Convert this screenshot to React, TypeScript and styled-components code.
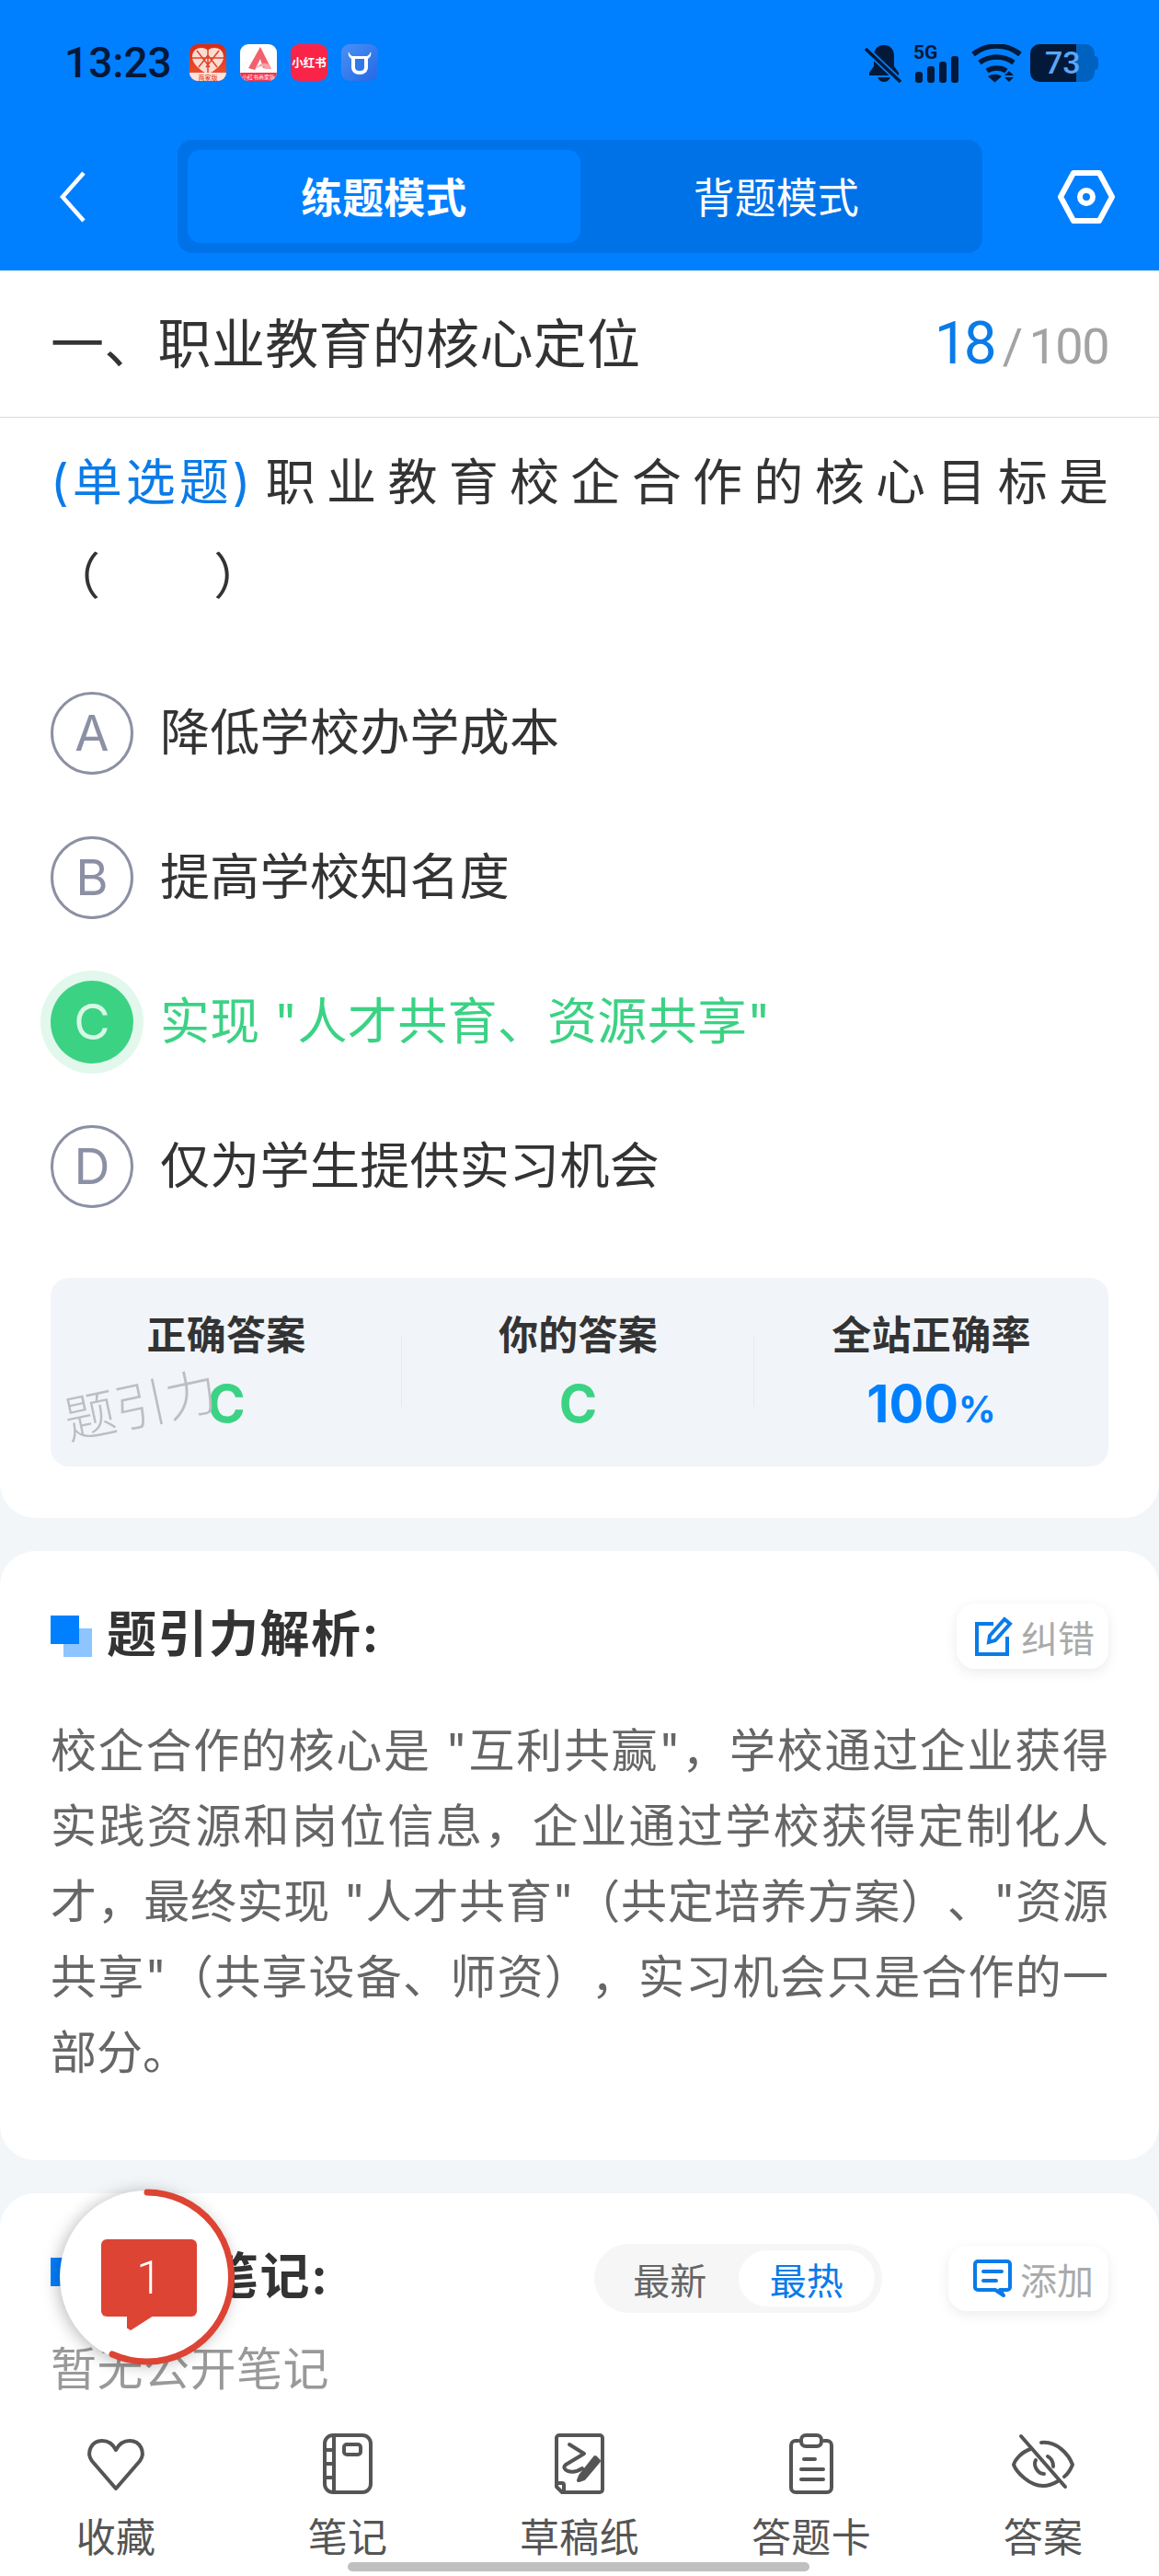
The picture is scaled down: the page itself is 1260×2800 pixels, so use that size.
import styled, { createGlobalStyle } from "styled-components";

const GlobalStyle = createGlobalStyle`
  html, body {
    margin: 0;
    padding: 0;
    background: #f2f6f9;
  }
  * {
    box-sizing: border-box;
  }
`;

const BLUE = "#0080ff";
const LINK = "#0a7be8";
const GREEN = "#3bd284";
const RED = "#dd4433";
const INK = "#03193a";

const Page = styled.div`
  position: relative;
  width: 1260px;
  height: 2800px;
  overflow: hidden;
  display: flex;
  flex-direction: column;
  background: #f2f6f9;
  font-family: Inter, "Noto Sans CJK SC", sans-serif;
  color: #333;
  text-spacing-trim: space-all;
`;

const Header = styled.header`
  background: ${BLUE};
  height: 294px;
  flex: none;
`;
const StatusBar = styled.div`
  height: 152px;
  padding: 48px 70px 0 70px;
  display: flex;
  align-items: flex-start;
`;
const Clock = styled.div`
  font-family: Roboto, sans-serif;
  font-size: 46px;
  font-weight: 500;
  line-height: 40px;
  color: ${INK};
  width: 136px;
`;
const AppIcons = styled.div`
  display: flex;
  gap: 15px;
  svg {
    display: block;
  }
`;
const StatusIcons = styled.div`
  margin-left: auto;
  display: flex;
  align-items: flex-start;
  svg {
    display: block;
  }
`;
const Battery = styled.div`
  position: relative;
  margin-left: 9px;
  width: 70px;
  height: 41px;
  border-radius: 10px;
  background: linear-gradient(90deg, ${INK} 50px, #0062c0 50px);
  color: #5aa7f5;
  font-family: Roboto, sans-serif;
  font-size: 34px;
  font-weight: 500;
  line-height: 41px;
  padding-left: 16px;
  &::after {
    content: "";
    position: absolute;
    right: -4px;
    top: 13px;
    width: 4px;
    height: 15px;
    border-radius: 0 4px 4px 0;
    background: #0062c0;
  }
`;
const NavRow = styled.nav`
  height: 123px;
  display: grid;
  grid-template-columns: 193px 875px 1fr;
  align-items: center;
`;
const BackIcon = styled.svg`
  margin-left: 64px;
  display: block;
`;
const SettingsIcon = styled.svg`
  margin-left: 82px;
  display: block;
`;
const ModeTabs = styled.div`
  height: 123px;
  padding: 11px;
  display: flex;
  background: #0072e8;
  border-radius: 16px;
`;
const ModeTab = styled.div<{ $active?: boolean }>`
  flex: 1;
  display: flex;
  align-items: center;
  justify-content: center;
  padding-bottom: 2px;
  border-radius: 14px;
  background: ${(p) => (p.$active ? BLUE : "transparent")};
  color: #fff;
  font-size: 45px;
  font-weight: ${(p) => (p.$active ? 700 : 400)};
`;

const Scroll = styled.main`
  flex: 1;
  min-height: 0;
  overflow: hidden;
  display: flex;
  flex-direction: column;
  gap: 36px;
`;
const QuestionCard = styled.section`
  position: relative;
  background: #fff;
  border-radius: 0 0 38px 38px;
  height: 1356px;
  flex: none;
`;
const TitleRow = styled.div`
  height: 160px;
  padding: 0 55px;
  display: flex;
  align-items: center;
  justify-content: space-between;
  border-bottom: 1px solid #d9d9d9;
`;
const ChapterTitle = styled.h1`
  margin: 0;
  padding-bottom: 7px;
  font-size: 58px;
  font-weight: 400;
  letter-spacing: 0.3px;
  color: #333;
`;
const Progress = styled.div`
  display: flex;
  align-items: baseline;
  font-family: Roboto, sans-serif;
  font-size: 54px;
  letter-spacing: -1.5px;
  color: #a3a3a3;
  b {
    font-size: 64px;
    font-weight: 400;
    letter-spacing: -4px;
    color: ${LINK};
    margin-right: 10px;
  }
  i {
    font-style: normal;
    margin-right: 8px;
  }
`;
const Question = styled.p`
  margin: 0;
  padding: 20px 55px 0;
  font-size: 54px;
  line-height: 102px;
  text-align: justify;
  color: #333;
`;
const QuestionType = styled.span`
  display: inline-block;
  letter-spacing: 4px;
  color: ${LINK};
`;
const Blank = styled.span`
  white-space: nowrap;
`;
const Options = styled.div`
  margin-top: 40px;
  padding: 0 55px;
`;
const OptionRow = styled.div`
  height: 157px;
  display: flex;
  align-items: center;
  gap: 29px;
`;
const OptionMark = styled.div<{ $correct?: boolean }>`
  width: 90px;
  height: 90px;
  border-radius: 50%;
  flex: none;
  display: flex;
  align-items: center;
  justify-content: center;
  font-size: 54px;
  border: ${(p) => (p.$correct ? "none" : "3px solid #8c90a4")};
  color: ${(p) => (p.$correct ? "#d8f8e6" : "#8c90a4")};
  background: ${(p) => (p.$correct ? GREEN : "#fff")};
  box-shadow: ${(p) => (p.$correct ? "0 0 0 11px #e2f8ec" : "none")};
`;
const OptionText = styled.div<{ $correct?: boolean }>`
  padding-bottom: 9px;
  font-size: 54px;
  letter-spacing: 0.3px;
  color: ${(p) => (p.$correct ? GREEN : "#333")};
`;
const Stats = styled.div`
  position: relative;
  margin: 43px 55px 0;
  height: 205px;
  background: #f1f5f9;
  border-radius: 20px;
  display: grid;
  grid-template-columns: 382px 383px 385px;
`;
const StatCol = styled.div<{ $divided?: boolean }>`
  position: relative;
  display: flex;
  flex-direction: column;
  align-items: center;
  padding-top: 32px;
  &::after {
    content: "";
    display: ${(p) => (p.$divided ? "block" : "none")};
    position: absolute;
    right: 0;
    top: 62px;
    height: 78px;
    width: 1px;
    background: #e6eaee;
  }
`;
const StatLabel = styled.div`
  font-size: 43px;
  font-weight: 700;
  letter-spacing: 0.3px;
  line-height: 60px;
  color: #333;
`;
const StatValue = styled.div<{ $blue?: boolean }>`
  margin-top: 14px;
  font-size: 56px;
  font-weight: 700;
  line-height: 62px;
  color: ${(p) => (p.$blue ? BLUE : GREEN)};
  small {
    font-size: 40px;
  }
`;
const Watermark = styled.div`
  position: absolute;
  left: 14px;
  top: 104px;
  font-size: 56px;
  line-height: 70px;
  font-weight: 300;
  color: #bcbfc2;
  transform: rotate(-12deg);
  pointer-events: none;
`;

const Card = styled.section`
  background: #fff;
  border-radius: 38px;
  flex: none;
`;
const AnalysisCard = styled(Card)`
  padding: 57px 55px 76px;
`;
const NotesCard = styled(Card)`
  padding: 57px 55px 0;
  height: 500px;
`;
const SectionHead = styled.div`
  height: 71px;
  display: flex;
  align-items: center;
`;
const SectionMark = styled.span`
  position: relative;
  width: 45px;
  height: 45px;
  margin-right: 16px;
  flex: none;
  &::before,
  &::after {
    content: "";
    position: absolute;
    width: 31px;
    height: 31px;
  }
  &::after {
    left: 0;
    top: 0;
    background: ${BLUE};
  }
  &::before {
    right: 0;
    bottom: 0;
    background: #8cc5ff;
  }
`;
const SectionTitle = styled.h2`
  margin: 0;
  padding-bottom: 4px;
  font-size: 54px;
  font-weight: 700;
  line-height: 64px;
  letter-spacing: 1.5px;
  color: #333;
`;
const ActionButton = styled.div`
  margin-left: auto;
  height: 71px;
  padding: 0 15px 0 18px;
  display: flex;
  align-items: center;
  gap: 8px;
  background: #fff;
  border-radius: 20px;
  box-shadow: 0 4px 14px rgba(0, 0, 0, 0.08);
  font-size: 40px;
  color: #aaa;
  svg {
    display: block;
  }
`;
const AnalysisText = styled.p`
  margin: 48px 0 0;
  font-size: 50px;
  line-height: 82px;
  color: #666;
  text-align: justify;
`;
const SortSwitch = styled.div`
  margin-left: auto;
  width: 313px;
  height: 75px;
  padding: 7px 8px 7px 8px;
  display: flex;
  background: #f6f6f6;
  border-radius: 38px;
`;
const SortOption = styled.div<{ $active?: boolean }>`
  flex: 1;
  display: flex;
  align-items: center;
  justify-content: center;
  border-radius: 31px;
  font-size: 40px;
  background: ${(p) => (p.$active ? "#fff" : "transparent")};
  color: ${(p) => (p.$active ? LINK : "#666")};
`;
const AddButton = styled(ActionButton)`
  margin-left: 72px;
  padding: 0 16px 0 26px;
`;
const EmptyNote = styled.div`
  margin-top: 33px;
  font-size: 50px;
  letter-spacing: 0.5px;
  line-height: 60px;
  color: #999;
`;

const TabBar = styled.footer`
  flex: none;
  height: 170px;
  padding-top: 13px;
  display: grid;
  grid-template-columns: repeat(5, 1fr);
  background: #fff;
`;
const TabItem = styled.div`
  display: flex;
  flex-direction: column;
  align-items: center;
  gap: 20px;
  font-size: 43px;
  letter-spacing: 0.3px;
  line-height: 50px;
  color: #555;
  svg {
    display: block;
  }
`;
const HomeBar = styled.div`
  position: absolute;
  left: 378px;
  bottom: 5px;
  width: 502px;
  height: 10px;
  border-radius: 5px;
  background: #c0c0c0;
`;

const Floating = styled.div`
  position: absolute;
  left: 59px;
  top: 2375px;
  width: 200px;
  height: 200px;
  svg {
    display: block;
  }
`;
const FloatingFace = styled.div`
  position: absolute;
  inset: 6px;
  border-radius: 50%;
  background: #fff;
  box-shadow: -2px 2px 18px rgba(0, 0, 0, 0.28);
`;
const FloatingRing = styled.svg`
  position: absolute;
  left: 0;
  top: 0;
`;
const Bubble = styled.div`
  position: absolute;
  left: 51px;
  top: 59px;
  width: 104px;
  height: 84px;
  border-radius: 6px;
  background: ${RED};
  color: #fff;
  font-family: Roboto, sans-serif;
  font-size: 50px;
  font-weight: 300;
  display: flex;
  align-items: center;
  justify-content: center;
  &::after {
    content: "";
    position: absolute;
    left: 28px;
    bottom: -15px;
    width: 29px;
    height: 16px;
    background: ${RED};
    clip-path: polygon(0 0, 100% 0, 14% 100%, 0 85%);
  }
`;

const PinduoduoIcon = () => (
  <svg width="40" height="40" viewBox="0 0 40 40">
    <defs>
      <linearGradient id="pdd" x1="0" y1="0" x2="0" y2="1">
        <stop offset="0" stopColor="#d92a12" />
        <stop offset="1" stopColor="#f0583a" />
      </linearGradient>
      <clipPath id="pddClip">
        <rect width="40" height="40" rx="9" />
      </clipPath>
    </defs>
    <g clipPath="url(#pddClip)">
      <rect width="40" height="40" fill="url(#pdd)" />
      <path d="M20 7c-4-5-17-4-17 7 0 8 10 15 17 19 7-4 17-11 17-19 0-11-13-12-17-7z" fill="#fbdcd2" />
      <path d="M8 7l14 18M32 7L18 25M3 15h34M10 25l10-13 10 13M20 5v26" stroke="#e0432a" strokeWidth="1.5" fill="none" />
      <rect y="31" width="40" height="9" fill="#fde3da" />
      <text x="20" y="38.500" textAnchor="middle" fontSize="7" fill="#d92a12" fontFamily="Noto Sans CJK SC">商家版</text>
    </g>
  </svg>
);
const ArkIcon = () => (
  <svg width="40" height="40" viewBox="0 0 40 40">
    <defs>
      <clipPath id="arkClip">
        <rect width="40" height="40" rx="9" />
      </clipPath>
    </defs>
    <g clipPath="url(#arkClip)">
      <rect width="40" height="40" fill="#fff" />
      <path d="M22 3L9 26l7 2 6-12 3 10 9 1z" fill="#f2616b" />
      <path d="M16 28c5-5 9-5 12-1l6 0-3-5c-5-3-11-1-15 6z" fill="#f9a3a6" />
      <rect y="31" width="40" height="9" fill="#f2354c" />
      <text x="20" y="38.200" textAnchor="middle" fontSize="6" fill="#fff" fontFamily="Noto Sans CJK SC">小红书商家版</text>
    </g>
  </svg>
);
const RedBookIcon = () => (
  <svg width="40" height="40" viewBox="0 0 40 40">
    <rect width="40" height="40" rx="9" fill="#fa2448" />
    <text x="20" y="25" textAnchor="middle" fontSize="12.500" fontWeight="700" fill="#fff" fontFamily="Noto Sans CJK SC">小红书</text>
  </svg>
);
const CowIcon = () => (
  <svg width="40" height="40" viewBox="0 0 40 40">
    <defs>
      <linearGradient id="cow" x1="0" y1="0" x2="1" y2="1">
        <stop offset="0" stopColor="#4a90f5" />
        <stop offset="1" stopColor="#2468e6" />
      </linearGradient>
    </defs>
    <rect width="40" height="40" rx="9" fill="url(#cow)" />
    <path d="M8 8c1 3 2 4 4 5h16c2-1 3-2 4-5 1 3 0 6-3 8v9c0 5-4 8-9 8s-9-3-9-8v-9c-3-2-4-5-3-8z" fill="#fff" />
    <path d="M15 16h10v9c0 3-2 4-5 4s-5-1-5-4z" fill="#3178ea" />
  </svg>
);

const BellOffIcon = () => (
  <svg width="42" height="42" viewBox="0 0 42 42" fill={INK}>
    <path d="M21 1c-8 0-11 6-11 12v11l-5 7v3h32v-3l-5-7V13c0-6-3-12-11-12z" />
    <path d="M14 36h14c-1 3-4 5-7 5s-6-2-7-5z" />
    <path d="M1 5l38 36" stroke={BLUE} strokeWidth="7" />
    <path d="M1 5l38 36" stroke={INK} strokeWidth="3.500" />
  </svg>
);
const SignalIcon = () => (
  <svg width="50" height="42" viewBox="0 0 50 42" fill={INK} style={{ marginLeft: 11 }}>
    <text x="0" y="16" fontSize="21" fontWeight="700" fontFamily="Roboto" fill={INK}>5G</text>
    <rect x="2" y="30" width="8" height="12" rx="3" />
    <rect x="15" y="24" width="8" height="18" rx="3" />
    <rect x="28" y="19" width="8" height="23" rx="3" />
    <rect x="41" y="13" width="8" height="29" rx="3" />
  </svg>
);
const WifiIcon = () => (
  <svg width="55" height="42" viewBox="0 0 55 42" style={{ marginLeft: 13 }}>
    <g fill="none" stroke={INK} strokeWidth="5.500">
      <path d="M2 11c15-12 36-12 51 0" />
      <path d="M9 20c11-8 26-8 37 0" />
      <path d="M17 29c6-4 15-4 21 0" />
    </g>
    <path d="M18 35c5-3 10-3 15 0l-7.500 6.500z" fill={INK} />
    <path d="M41 29l5 5h-10zM36 36h10l-5 5z" fill={INK} />
  </svg>
);

const TabSvg = ({ children }: { children: React.ReactNode }) => (
  <svg width="70" height="70" viewBox="0 0 70 70" fill="none" stroke="#555" strokeWidth="4" strokeLinecap="round" strokeLinejoin="round">
    {children}
  </svg>
);

const App = () => (
  <Page>
    <GlobalStyle />
    <Header>
      <StatusBar>
        <Clock>13:23</Clock>
        <AppIcons>
          <PinduoduoIcon />
          <ArkIcon />
          <RedBookIcon />
          <CowIcon />
        </AppIcons>
        <StatusIcons>
          <BellOffIcon />
          <SignalIcon />
          <WifiIcon />
          <Battery>73</Battery>
        </StatusIcons>
      </StatusBar>
      <NavRow>
        <BackIcon width="30" height="56" viewBox="0 0 30 56" fill="none" stroke="#fff" strokeWidth="4.500">
          <path d="M27 2L4 28l23 26" />
        </BackIcon>
        <ModeTabs>
          <ModeTab $active>练题模式</ModeTab>
          <ModeTab>背题模式</ModeTab>
        </ModeTabs>
        <SettingsIcon width="62" height="60" viewBox="0 0 62 60" fill="none" stroke="#fff" strokeWidth="6" strokeLinejoin="round">
          <path d="M17 4h28l14 26-14 26H17L3 30z" />
          <circle cx="31" cy="30" r="7" />
        </SettingsIcon>
      </NavRow>
    </Header>

    <Scroll>
      <QuestionCard>
        <TitleRow>
          <ChapterTitle>一、职业教育的核心定位</ChapterTitle>
          <Progress>
            <b>18</b>
            <i>/</i>100
          </Progress>
        </TitleRow>
        <Question>
          <QuestionType>(单选题)</QuestionType>职业教育校企合作的核心目标是 <Blank>（　&nbsp;　）</Blank>
        </Question>
        <Options>
          <OptionRow>
            <OptionMark>A</OptionMark>
            <OptionText>降低学校办学成本</OptionText>
          </OptionRow>
          <OptionRow>
            <OptionMark>B</OptionMark>
            <OptionText>提高学校知名度</OptionText>
          </OptionRow>
          <OptionRow>
            <OptionMark $correct>C</OptionMark>
            <OptionText $correct>实现 "人才共育、资源共享"</OptionText>
          </OptionRow>
          <OptionRow>
            <OptionMark>D</OptionMark>
            <OptionText>仅为学生提供实习机会</OptionText>
          </OptionRow>
        </Options>
        <Stats>
          <StatCol $divided>
            <StatLabel>正确答案</StatLabel>
            <StatValue>C</StatValue>
          </StatCol>
          <StatCol $divided>
            <StatLabel>你的答案</StatLabel>
            <StatValue>C</StatValue>
          </StatCol>
          <StatCol>
            <StatLabel>全站正确率</StatLabel>
            <StatValue $blue>
              100<small>%</small>
            </StatValue>
          </StatCol>
          <Watermark>题引力</Watermark>
        </Stats>
      </QuestionCard>

      <AnalysisCard>
        <SectionHead>
          <SectionMark />
          <SectionTitle>题引力解析:</SectionTitle>
          <ActionButton>
            <svg width="44" height="44" viewBox="0 0 44 44" fill="none" stroke={LINK} strokeWidth="4">
              <path d="M22 8H4v33h33V22" />
              <path d="M18 21L34 3l6 5-16 18-7 2z" />
            </svg>
            纠错
          </ActionButton>
        </SectionHead>
        <AnalysisText>
          校企合作的核心是 "互利共赢"，学校通过企业获得实践资源和岗位信息，企业通过学校获得定制化人才，最终实现 "人才共育"（共定培养方案）、"资源共享"（共享设备、师资），实习机会只是合作的一部分。
        </AnalysisText>
      </AnalysisCard>

      <NotesCard>
        <SectionHead>
          <SectionMark />
          <SectionTitle>公开笔记:</SectionTitle>
          <SortSwitch>
            <SortOption>最新</SortOption>
            <SortOption $active>最热</SortOption>
          </SortSwitch>
          <AddButton>
            <svg width="44" height="44" viewBox="0 0 44 44" fill="none" stroke={LINK} strokeWidth="4" strokeLinejoin="round" strokeLinecap="round">
              <path d="M6 3h32a3 3 0 0 1 3 3v25a3 3 0 0 1-3 3H32l-2 0 4 6-9-6H6a3 3 0 0 1-3-3V6a3 3 0 0 1 3-3z" />
              <path d="M12 14h20M12 24h14" />
            </svg>
            添加
          </AddButton>
        </SectionHead>
        <EmptyNote>暂无公开笔记</EmptyNote>
      </NotesCard>
    </Scroll>

    <TabBar>
      <TabItem>
        <TabSvg>
          <path d="M35 62L9 32C2 22 9 10 20 10c7 0 12 4 15 10 3-6 8-10 15-10 11 0 18 12 11 22z" />
        </TabSvg>
        收藏
      </TabItem>
      <TabItem>
        <TabSvg>
          <rect x="10" y="4" width="50" height="62" rx="9" />
          <path d="M20 4v62M10 20h10M10 35h10M10 50h10" />
          <rect x="31" y="14" width="18" height="11" rx="3" />
        </TabSvg>
        笔记
      </TabItem>
      <TabItem>
        <TabSvg>
          <path d="M18 66h-2l-4-4-2-2V7a3 3 0 0 1 3-3h44a3 3 0 0 1 3 3v56a3 3 0 0 1-3 3z" />
          <path d="M10 56h6a2 2 0 0 1 2 2v8" />
          <path d="M24 14l16 10-20 12c-6 5 6 12 18 4" />
          <path d="M36 48l16-20 4 4-16 19-6 2z" fill="#555" />
        </TabSvg>
        草稿纸
      </TabItem>
      <TabItem>
        <TabSvg>
          <path d="M21 10h-3a5 5 0 0 0-5 5v46a5 5 0 0 0 5 5h34a5 5 0 0 0 5-5V15a5 5 0 0 0-5-5h-3" />
          <rect x="24" y="4" width="22" height="12" rx="5" />
          <path d="M27 30h12M24 41h24M24 52h24" />
        </TabSvg>
        答题卡
      </TabItem>
      <TabItem>
        <TabSvg>
          <path d="M21 19C10 23 4 32 3 36c3 8 17 23 32 23 6 0 11-2 16-5M33 12c17-2 30 13 34 24-2 5-5 10-9 13" />
          <path d="M27 31c-3 6 2 15 9 15M40 27c4 2 6 6 6 11" />
          <path d="M11 5l48 55" />
        </TabSvg>
        答案
      </TabItem>
    </TabBar>
    <HomeBar />

    <Floating>
      <FloatingFace />
      <FloatingRing width="200" height="200" viewBox="0 0 200 200" fill="none" stroke={RED} strokeWidth="7" strokeLinecap="round">
        <path d="M101 8A92 92 0 1 1 63 184" />
      </FloatingRing>
      <Bubble>1</Bubble>
    </Floating>
  </Page>
);

export default App;
